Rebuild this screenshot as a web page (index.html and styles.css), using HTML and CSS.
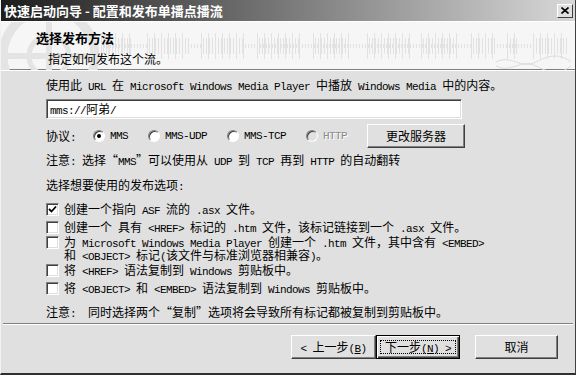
FILE: index.html
```html
<!DOCTYPE html>
<html lang="zh-CN">
<head>
  <meta charset="UTF-8">
  <title>快速启动向导 - 配置和发布单播点播流</title>
  <link rel="stylesheet" href="styles.css">
</head>
<body>
  <div class="window">
    <div class="titlebar">
      <span class="title">快速启动向导 - 配置和发布单播点播流</span>
      <span class="close"><svg width="8" height="7" viewBox="0 0 8 7"><path d="M0.5 0.5L7.5 6.5M7.5 0.5L0.5 6.5" stroke="#000" stroke-width="1.6"/></svg></span>
    </div>
    <div class="banner">
      <svg class="deco" width="576" height="48" viewBox="0 0 576 48">
        <g fill="none" stroke="#e4e4e4">
          <circle cx="48" cy="34" r="46" stroke-width="9"/>
          <circle cx="48" cy="34" r="20" stroke-width="5"/>
          <path d="M48 -12V80M2 34H94" stroke-width="6"/>
        </g>
        <g stroke="#e2e2e2">
          <path d="M100 24H132M146 24H188M200 24H244M256 24H300M312 24H348M366 24H410M420 24H458M470 24H494M506 24H518M532 24H566" stroke-width="26" stroke-dasharray="1 6"/>
          <path d="M102 24H132M148 24H188M202 24H244M258 24H300M314 24H348M368 24H410M422 24H458M472 24H494M506 24H518M532 24H566" stroke-width="16" stroke-dasharray="1 2"/>
          <path d="M100 24H566" stroke-width="4" stroke-dasharray="1 2"/>
        </g>
        <path d="M495 40C510 32 520 48 535 40S560 32 570 40M495 44C510 52 520 36 535 44S560 52 570 44" fill="none" stroke="#dcdcdc"/>
      </svg>
      <h1>选择发布方法</h1>
      <p>指定如何发布这个流。</p>
    </div>
    <div class="content">
      <p class="line">使用此<span class="en"> URL </span>在<span class="en"> Microsoft Windows Media Player </span>中播放<span class="en"> Windows Media </span>中的内容。</p>
      <div class="field"><span class="en">mms://</span>阿弟<span class="en">/</span></div>
      <div class="proto">
        <span class="lbl">协议<span class="en">:</span></span>
        <label class="radio"><i class="dot on"></i><span class="en">MMS</span></label>
        <label class="radio"><i class="dot"></i><span class="en">MMS-UDP</span></label>
        <label class="radio"><i class="dot"></i><span class="en">MMS-TCP</span></label>
        <label class="radio off"><i class="dot"></i><span class="en">HTTP</span></label>
        <button class="btn server">更改服务器</button>
      </div>
      <p class="line note">注意<span class="en">: </span>选择“<span class="en">MMS</span>”可以使用从<span class="en"> UDP </span>到<span class="en"> TCP </span>再到<span class="en"> HTTP </span>的自动翻转</p>
      <p class="line pick">选择想要使用的发布选项<span class="en">:</span></p>
      <div class="opts">
        <div class="opt"><i class="box on"><svg width="9" height="9" viewBox="0 0 9 9"><path d="M1 4L3.5 6.5L8 1.5" fill="none" stroke="#000" stroke-width="1.8"/></svg></i><span>创建一个指向<span class="en"> ASF </span>流的<span class="en"> .asx </span>文件。</span></div>
        <div class="opt"><i class="box"></i><span>创建一个<span class="en"> </span>具有<span class="en"> &lt;HREF&gt; </span>标记的<span class="en"> .htm </span>文件，该标记链接到一个<span class="en"> .asx </span>文件。</span></div>
        <div class="opt two"><i class="box"></i><span>为<span class="en"> Microsoft Windows Media Player </span>创建一个<span class="en"> .htm </span>文件，其中含有<span class="en"> &lt;EMBED&gt;</span><br>和<span class="en"> &lt;OBJECT&gt; </span>标记<span class="en">(</span>该文件与标准浏览器相兼容<span class="en">)</span>。</span></div>
        <div class="opt gap"><i class="box"></i><span>将<span class="en"> &lt;HREF&gt; </span>语法复制到<span class="en"> Windows </span>剪贴板中。</span></div>
        <div class="opt"><i class="box"></i><span>将<span class="en"> &lt;OBJECT&gt; </span>和<span class="en"> &lt;EMBED&gt; </span>语法复制到<span class="en"> Windows </span>剪贴板中。</span></div>
      </div>
      <p class="line note2">注意<span class="en">:  </span>同时选择两个“复制”选项将会导致所有标记都被复制到剪贴板中。</p>
    </div>
    <div class="sep"></div>
    <div class="actions">
      <button class="btn"><span class="en">&lt; </span>上一步<span class="en">(<u>B</u>)</span></button>
      <button class="btn default">下一步<span class="en">(<u>N</u>) &gt;</span></button>
      <button class="btn cancel">取消</button>
    </div>
  </div>
</body>
</html>
```
FILE: styles.css
```css
* { box-sizing: border-box; }
body { margin: 0; background: #e0e0e0; color: #000; font-family: "Noto Sans CJK SC", sans-serif; font-size: 12px; line-height: 14px; }
.en { font-family: "Liberation Mono", monospace; font-size: 11px; letter-spacing: -0.6px; line-height: 10px; white-space: pre; }
.window { width: 576px; height: 375px; border-left: 1px solid #f2f2f2; border-right: 1px solid #404040; border-bottom: 2px solid #303030; overflow: hidden; }

.titlebar { height: 21px; background: linear-gradient(90deg, #1c1c1c, #d8d8d8); display: flex; align-items: center; justify-content: space-between; padding: 0 2px 0 3px; }
.title { color: #fff; font-weight: bold; font-size: 13px; line-height: 15px; }
.close { width: 16px; height: 14px; background: #e0e0e0; border: 1px solid; border-color: #fff #404040 #404040 #fff; display: flex; align-items: center; justify-content: center; }

.banner { position: relative; height: 49px; background: #f6f6f6; border-top: 1px solid #fff; border-bottom: 1px solid #808080; padding: 8px 0 0 35px; }
.deco { position: absolute; top: 0; left: 0; }
.banner h1 { position: relative; margin: 0; font-size: 13px; line-height: 15px; font-weight: bold; }
.banner p { position: relative; margin: 7px 0 0 12px; }

.content { border-top: 1px solid #fff; padding: 7px 0 0 45px; }
.line { margin: 0; height: 14px; }
.field { margin-top: 7px; width: 416px; height: 20px; background: #fff; border: 1px solid; border-color: #808080 #fff #fff #808080; box-shadow: inset 1px 1px #404040, inset -1px -1px #dfdfdf; padding: 2px 3px; line-height: 14px; }

.proto { display: flex; align-items: center; gap: 20px; height: 24px; margin-top: 5px; }
.lbl { width: 27px; white-space: nowrap; }
.radio { display: flex; align-items: center; gap: 5px; }
.dot { width: 12px; height: 12px; border-radius: 50%; background: #fff; border: 1px solid; border-color: #808080 #fff #fff #808080; box-shadow: inset 1px 1px #404040; display: flex; align-items: center; justify-content: center; }
.dot.on::after { content: ""; width: 4px; height: 4px; border-radius: 50%; background: #000; }
.radio.off .dot { background: #e0e0e0; }
.radio.off .en { color: #8a8a8a; text-shadow: 1px 1px #fff; }

.btn { font-family: inherit; font-size: 12px; line-height: 14px; color: #000; background: #e0e0e0; height: 24px; padding: 0; border: 1px solid; border-color: #fff #404040 #404040 #fff; box-shadow: inset -1px -1px #808080, inset 1px 1px #dfdfdf; }
.server { width: 98px; }

.note { margin-top: 5px; }
.pick { margin-top: 11px; }
.opts { margin-top: 8px; }
.opt { display: flex; align-items: center; height: 18px; }
.opt.two { align-items: flex-start; height: 24px; line-height: 12px; }
.opt.gap { margin-top: 1px; }
.box { flex: none; width: 13px; height: 13px; margin-right: 5px; background: #fff; border: 1px solid; border-color: #808080 #fff #fff #808080; box-shadow: inset 1px 1px #404040, inset -1px -1px #dfdfdf; display: flex; align-items: center; justify-content: center; }
.note2 { margin-top: 8px; }

.sep { margin: 4px 2px 0; border-top: 1px solid #808080; border-bottom: 1px solid #fff; }
.actions { display: flex; justify-content: flex-end; margin-top: 10px; padding-right: 17px; }
.actions .btn { width: 85px; }
.actions .default { position: relative; width: 84px; border: 1px solid #000; box-shadow: inset 1px 1px #fff, inset -1px -1px #404040, inset -2px -2px #808080; }
.actions .default::after { content: ""; position: absolute; inset: 4px 3px; border: 1px dotted #000; }
.actions .cancel { width: 83px; margin-left: 15px; }
```
